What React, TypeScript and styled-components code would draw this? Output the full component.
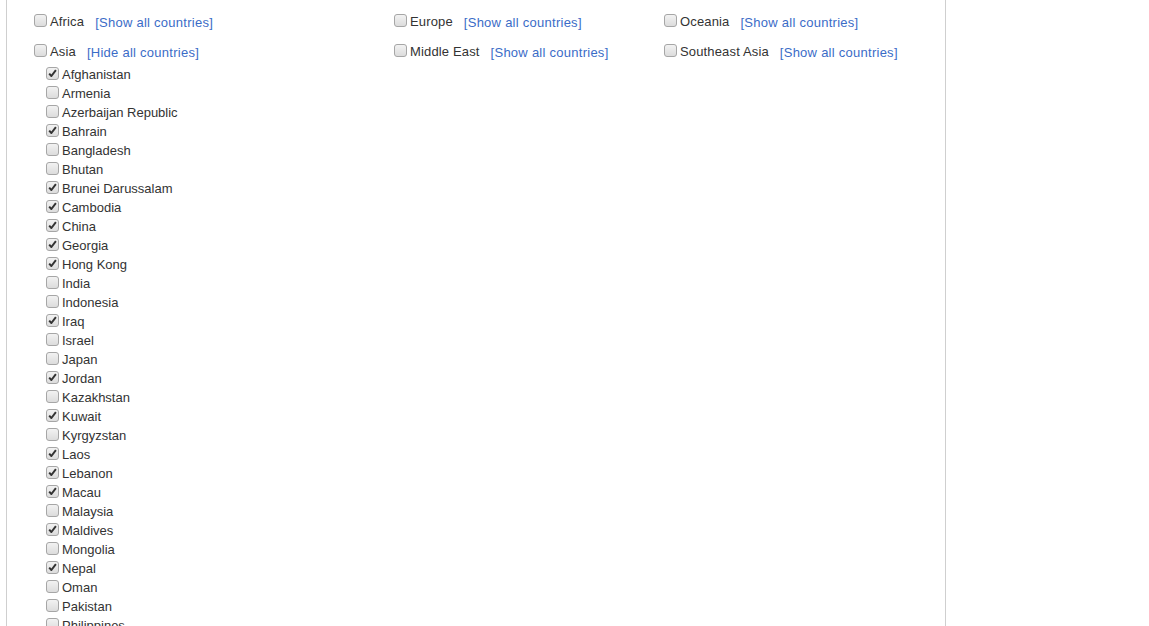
import React from "react";
import styled, { createGlobalStyle } from "styled-components";

const Global = createGlobalStyle`
  html, body { margin: 0; padding: 0; background: #fff; overflow: hidden; }
  body { font-family: "Liberation Sans", Arial, sans-serif; font-size: 13px; color: #333; }
`;

const Panel = styled.div`
  box-sizing: border-box;
  margin-left: 6px;
  width: 940px;
  min-height: 626px;
  border-left: 1px solid #cfcfcf;
  border-right: 1px solid #cfcfcf;
  padding: 12px 0 0 27px;
`;

const Grid = styled.div`
  display: grid;
  grid-template-columns: 360px 270px 1fr;
  row-gap: 11px;
  align-items: start;
`;

const Region = styled.div`
  display: flex;
  flex-direction: column;
`;

const Row = styled.label<{ $h: number }>`
  display: flex;
  align-items: center;
  height: ${(p) => p.$h}px;
  line-height: ${(p) => p.$h}px;
  white-space: nowrap;
  cursor: default;
`;

const Box = styled.span<{ $checked: boolean }>`
  box-sizing: border-box;
  width: 13px;
  height: 13px;
  margin-right: 3px;
  margin-bottom: 2px;
  border: 1px solid #a6a6a6;
  border-radius: 3px;
  background: linear-gradient(#f2f2f2, #dcdcdc);
  display: inline-flex;
  align-items: center;
  justify-content: center;
  flex-shrink: 0;
`;

const Label = styled.span<{ $region?: boolean }>`
  color: #333;
  letter-spacing: ${(p) => (p.$region ? "0.15px" : "0")};
`;

const Toggle = styled.a`
  margin-left: 11px;
  color: #3b6cc7;
  text-decoration: none;
  letter-spacing: 0.26px;
  padding-top: 1px;
`;

const List = styled.div`
  display: flex;
  flex-direction: column;
  margin-top: 4px;
  padding-left: 12px;
`;

const Check = ({ checked }: { checked: boolean }) => (
  <Box $checked={checked}>
    {checked && (
      <svg width="9" height="9" viewBox="0 0 9 9">
        <path d="M1.2 4.6 L3.4 7 L7.9 1.2" fill="none" stroke="#333" strokeWidth="2" strokeLinejoin="round" />
      </svg>
    )}
  </Box>
);

const countries: [string, boolean][] = [
  ["Afghanistan", true],
  ["Armenia", false],
  ["Azerbaijan Republic", false],
  ["Bahrain", true],
  ["Bangladesh", false],
  ["Bhutan", false],
  ["Brunei Darussalam", true],
  ["Cambodia", true],
  ["China", true],
  ["Georgia", true],
  ["Hong Kong", true],
  ["India", false],
  ["Indonesia", false],
  ["Iraq", true],
  ["Israel", false],
  ["Japan", false],
  ["Jordan", true],
  ["Kazakhstan", false],
  ["Kuwait", true],
  ["Kyrgyzstan", false],
  ["Laos", true],
  ["Lebanon", true],
  ["Macau", true],
  ["Malaysia", false],
  ["Maldives", true],
  ["Mongolia", false],
  ["Nepal", true],
  ["Oman", false],
  ["Pakistan", false],
  ["Philippines", false],
];

const RegionHead = ({ name, open }: { name: string; open?: boolean }) => (
  <Row $h={19}>
    <Check checked={false} />
    <Label $region>{name}</Label>
    <Toggle href="#">{open ? "[Hide all countries]" : "[Show all countries]"}</Toggle>
  </Row>
);

export default function App() {
  return (
    <>
      <Global />
      <Panel>
        <Grid>
          <Region><RegionHead name="Africa" /></Region>
          <Region><RegionHead name="Europe" /></Region>
          <Region><RegionHead name="Oceania" /></Region>
          <Region>
            <RegionHead name="Asia" open />
            <List>
              {countries.map(([n, c]) => (
                <Row $h={19} key={n}>
                  <Check checked={c} />
                  <Label>{n}</Label>
                </Row>
              ))}
            </List>
          </Region>
          <Region><RegionHead name="Middle East" /></Region>
          <Region><RegionHead name="Southeast Asia" /></Region>
        </Grid>
      </Panel>
    </>
  );
}
